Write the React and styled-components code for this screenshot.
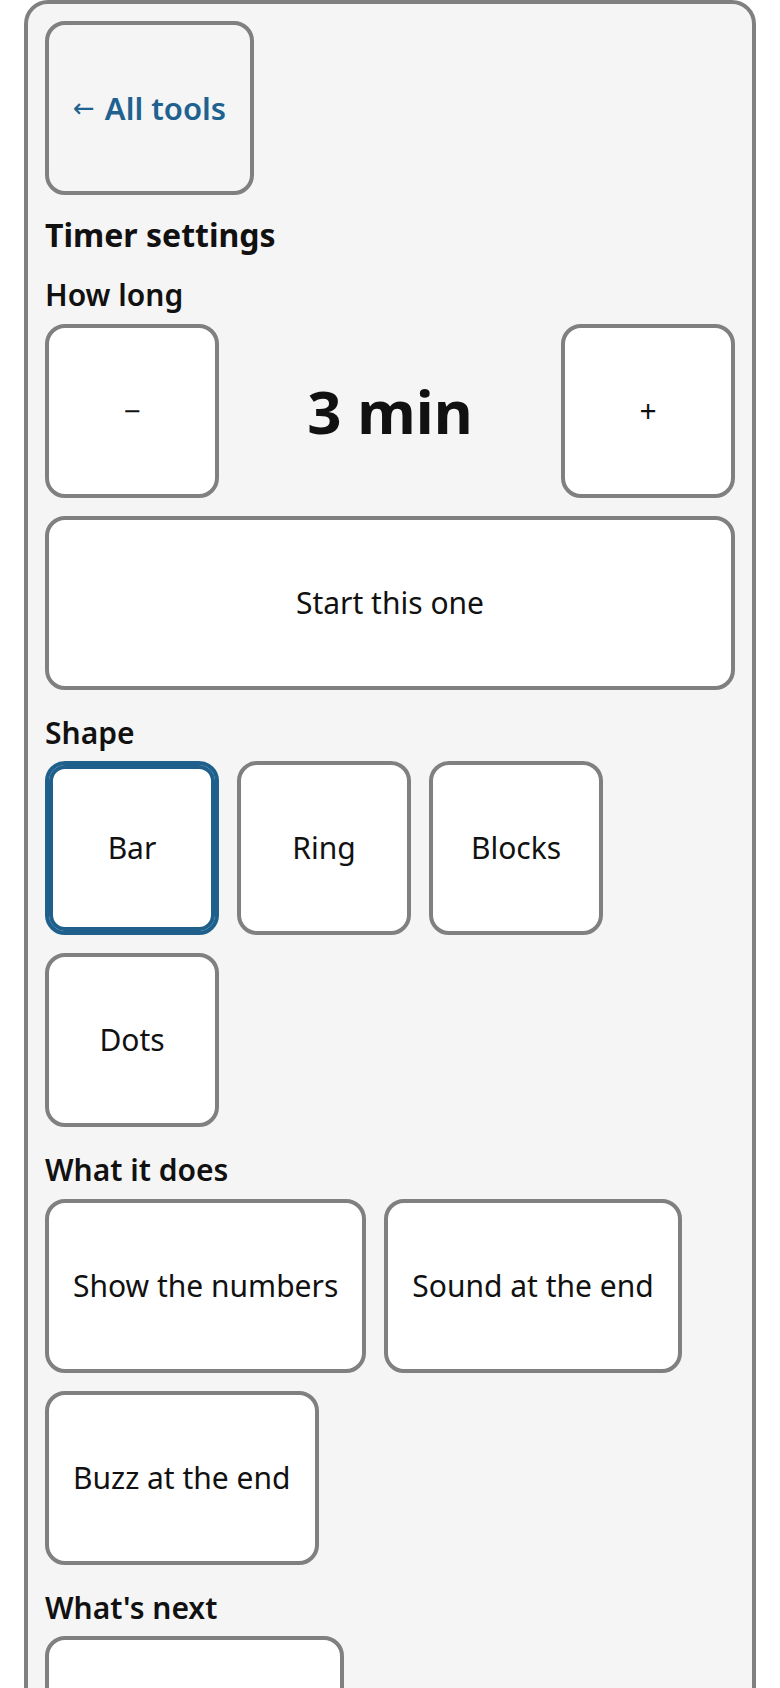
import React from "react";
import styled, { createGlobalStyle, css } from "styled-components";

const GlobalStyle = createGlobalStyle`
  html, body {
    margin: 0;
    padding: 0;
    background: #ffffff;
  }
  body {
    font-family: "Noto Sans", "Open Sans", "DejaVu Sans", sans-serif;
    color: #111111;
  }
  * { box-sizing: border-box; }
`;

const Panel = styled.main`
  margin: 0 24px;
  background: #f5f5f5;
  border: 4px solid #808080;
  border-radius: 24px;
  padding: 17px;
  display: flex;
  flex-direction: column;
`;

const ButtonBase = styled.button`
  font-family: "Noto Sans", "Open Sans", "DejaVu Sans", sans-serif;
  font-size: 30px;
  line-height: 40px;
  color: #111111;
  background: #ffffff;
  border: 4px solid #808080;
  border-radius: 20px;
  min-width: 174px;
  min-height: 174px;
  padding: 0 24px;
  display: flex;
  align-items: center;
  justify-content: center;
  white-space: nowrap;
  cursor: pointer;
  ${(p) =>
    p.$selected &&
    css`
      border-color: #1e5f8c;
      box-shadow: inset 0 0 0 4px #1e5f8c;
    `}
`;

const BackButton = styled(ButtonBase)`
  align-self: flex-start;
  background: #f5f5f5;
  color: #1f6290;
  font-size: 31px;
  font-weight: 600;
  gap: 10px;
`;

const Arrow = styled.span`
  font-weight: 400;
  font-family: "DejaVu Sans", sans-serif;
  font-size: 26px;
`;

const Heading = styled.h2`
  margin: 18px 0 0;
  font-size: 32px;
  line-height: 44px;
  font-weight: 700;
`;

const Section = styled.section`
  margin-top: ${(p) => (p.$first ? "18px" : "23px")};
  display: flex;
  flex-direction: column;
`;

const Label = styled.h3`
  margin: 0 0 8.5px;
  font-size: 30px;
  line-height: 40px;
  font-weight: 600;
`;

const Stepper = styled.div`
  display: flex;
  align-items: center;
  justify-content: space-between;
`;

const Value = styled.div`
  font-size: 60px;
  font-weight: 700;
  color: #111111;
`;

const WideButton = styled(ButtonBase)`
  width: 100%;
  margin-top: 18px;
`;

const Options = styled.div`
  display: flex;
  flex-wrap: wrap;
  gap: 18px;
`;

const shapes = ["Bar", "Ring", "Blocks", "Dots"];
const behaviours = ["Show the numbers", "Sound at the end", "Buzz at the end"];
const nexts = ["Stop and go back"];

export default function App() {
  return (
    <>
      <GlobalStyle />
      <Panel>
        <BackButton type="button">
          <Arrow>←</Arrow>All tools
        </BackButton>
        <Heading>Timer settings</Heading>

        <Section $first>
          <Label>How long</Label>
          <Stepper>
            <ButtonBase type="button" aria-label="Less time">−</ButtonBase>
            <Value>3 min</Value>
            <ButtonBase type="button" aria-label="More time">+</ButtonBase>
          </Stepper>
          <WideButton type="button">Start this one</WideButton>
        </Section>

        <Section>
          <Label>Shape</Label>
          <Options>
            {shapes.map((s, i) => (
              <ButtonBase key={s} type="button" $selected={i === 0}>
                {s}
              </ButtonBase>
            ))}
          </Options>
        </Section>

        <Section>
          <Label>What it does</Label>
          <Options>
            {behaviours.map((s) => (
              <ButtonBase key={s} type="button">
                {s}
              </ButtonBase>
            ))}
          </Options>
        </Section>

        <Section>
          <Label>What's next</Label>
          <Options>
            {nexts.map((s) => (
              <ButtonBase key={s} type="button">
                {s}
              </ButtonBase>
            ))}
          </Options>
        </Section>
      </Panel>
    </>
  );
}
